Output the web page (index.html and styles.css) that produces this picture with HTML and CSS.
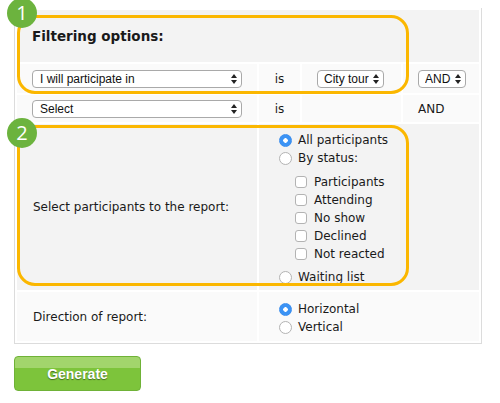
FILE: index.html
```html
<!DOCTYPE html>
<html lang="en">
<head>
    <meta charset="UTF-8">
    <title>Participants report</title>
    <link rel="stylesheet" href="styles.css">
</head>
<body>
    <div class="report">
        <table class="report-table">
            <colgroup>
                <col class="col-field">
                <col class="col-op">
                <col class="col-value">
                <col class="col-join">
            </colgroup>
            <tr class="head-row">
                <td colspan="4"><h3>Filtering options:</h3></td>
            </tr>
            <tr class="light-row first-filter">
                <td class="pad-cell">
                    <span class="select-box wide">
                        <select><option>I will participate in</option></select>
                        <svg class="arrows" width="6" height="10" viewBox="0 0 6 10"><path d="M3 0L6 4H0z M3 10L0 6H6z" fill="#222"/></svg>
                    </span>
                </td>
                <td class="op-cell">is</td>
                <td class="pad-cell">
                    <span class="select-box">
                        <select><option>City tour</option></select>
                        <svg class="arrows" width="6" height="10" viewBox="0 0 6 10"><path d="M3 0L6 4H0z M3 10L0 6H6z" fill="#222"/></svg>
                    </span>
                </td>
                <td class="pad-cell">
                    <span class="select-box">
                        <select><option>AND</option></select>
                        <svg class="arrows" width="6" height="10" viewBox="0 0 6 10"><path d="M3 0L6 4H0z M3 10L0 6H6z" fill="#222"/></svg>
                    </span>
                </td>
            </tr>
            <tr class="light-row">
                <td class="pad-cell">
                    <span class="select-box wide">
                        <select><option>Select</option></select>
                        <svg class="arrows" width="6" height="10" viewBox="0 0 6 10"><path d="M3 0L6 4H0z M3 10L0 6H6z" fill="#222"/></svg>
                    </span>
                </td>
                <td class="op-cell">is</td>
                <td class="pad-cell"></td>
                <td class="pad-cell">AND</td>
            </tr>
            <tr class="gray-row">
                <td class="label-cell">Select participants to the report:</td>
                <td colspan="3" class="options-cell">
                    <ul class="options participants">
                        <li><label><input type="radio" name="who" checked> All participants</label></li>
                        <li><label><input type="radio" name="who"> By status:</label>
                            <ul class="statuses">
                                <li><label><input type="checkbox"> Participants</label></li>
                                <li><label><input type="checkbox"> Attending</label></li>
                                <li><label><input type="checkbox"> No show</label></li>
                                <li><label><input type="checkbox"> Declined</label></li>
                                <li><label><input type="checkbox"> Not reacted</label></li>
                            </ul>
                        </li>
                        <li><label><input type="radio" name="who"> Waiting list</label></li>
                    </ul>
                </td>
            </tr>
            <tr class="light-row">
                <td class="label-cell">Direction of report:</td>
                <td colspan="3" class="options-cell">
                    <ul class="options direction">
                        <li><label><input type="radio" name="dir" checked> Horizontal</label></li>
                        <li><label><input type="radio" name="dir"> Vertical</label></li>
                    </ul>
                </td>
            </tr>
        </table>

        <button class="generate-btn">Generate</button>

        <!-- help callouts -->
        <div class="callout callout-filter"></div>
        <div class="callout callout-people"></div>
        <span class="step step-1">1</span>
        <span class="step step-2">2</span>
    </div>
</body>
</html>
```

FILE: styles.css
```css
body {
    margin: 0;
    padding: 10px 14px;
    font-family: 'DejaVu Sans', Verdana, sans-serif;
    font-size: 12px;
    color: #1a1a1a;
    background: #fff;
}
.report {
    position: relative;
    width: 468px;
}
.report-table {
    width: 468px;
    table-layout: fixed;
    border-collapse: separate;
    border-spacing: 2px;
    border: 1px solid #dcdcdc;
    border-top: none;
    margin-top: -2px;
}
.col-field { width: 240px; }
.col-op { width: 41px; }
.col-value { width: 99px; }
.col-join { width: 76px; }
.report-table td {
    padding: 0;
    vertical-align: middle;
}
.head-row td {
    background-color: #f3f3f3;
    height: 52px;
    padding-left: 15px;
}
.head-row h3 {
    margin: 0;
    font-size: 13.5px;
    font-weight: bold;
}
.light-row td {
    background-color: #fafafa;
}
.gray-row td {
    background-color: #f3f3f3;
}
.light-row .pad-cell,
.light-row .op-cell {
    height: 27px;
}
.first-filter .pad-cell,
.first-filter .op-cell {
    height: 29px;
}
.pad-cell {
    padding-left: 15px !important;
}
.op-cell {
    text-align: center;
}
.label-cell {
    padding-left: 16px !important;
}
.select-box {
    position: relative;
    display: inline-flex;
    vertical-align: middle;
}
.select-box select {
    -webkit-appearance: none;
    appearance: none;
    height: 18px;
    padding: 0 14px 0 6px;
    border: 1px solid #a9a9a9;
    border-radius: 4px;
    background: #fff;
    font-family: 'Liberation Sans', Arial, sans-serif;
    font-size: 12px;
    color: #111;
}
.select-box.wide select {
    width: 210px;
    padding-left: 7px;
}
.select-box .arrows {
    position: absolute;
    right: 5px;
    top: 4px;
    pointer-events: none;
}
.options-cell {
    padding-left: 20px !important;
}
.options,
.statuses {
    list-style: none;
    margin: 0;
    padding: 0;
}
.participants {
    padding: 7px 0 4px;
}
.direction {
    padding: 8px 0 5px;
}
.options li label {
    display: flex;
    align-items: center;
    gap: 6px;
    height: 18px;
}
.statuses {
    margin: 6px 0 5px 16px;
}
.statuses li label {
    gap: 7px;
}
.options input {
    -webkit-appearance: none;
    appearance: none;
    margin: 0;
    background: #fff;
    border: 1px solid #b3b3b3;
    flex-shrink: 0;
}
.options input[type="radio"] {
    width: 13px;
    height: 13px;
    border-radius: 50%;
}
.options input[type="radio"]:checked {
    background: radial-gradient(circle, #fff 0 2px, #3b93f5 2.5px);
    border-color: #3b8eee;
}
.options input[type="checkbox"] {
    width: 12px;
    height: 12px;
    border-radius: 3px;
}
.generate-btn {
    display: block;
    margin-top: 12px;
    width: 127px;
    height: 35px;
    border: 1px solid #6fb237;
    border-radius: 4px;
    background: linear-gradient(#a2d56c 0, #a2d56c 33%, #7dc43b 33%, #7dc43b 100%);
    color: #fff;
    font-family: 'Liberation Sans', Arial, sans-serif;
    font-size: 14px;
    font-weight: bold;
    text-shadow: 0 1px 1px rgba(0, 0, 0, 0.45);
    cursor: pointer;
}
.callout {
    position: absolute;
    left: 3px;
    width: 392px;
    border: 3px solid #fbb700;
    border-radius: 18px;
    box-sizing: border-box;
    pointer-events: none;
}
.callout-filter {
    top: 7px;
    height: 79px;
}
.callout-people {
    top: 117px;
    height: 161px;
}
.step {
    position: absolute;
    left: -7px;
    width: 30px;
    height: 30px;
    border-radius: 50%;
    background-color: #6cb33e;
    color: #fff;
    font-family: 'Open Sans', Arial, sans-serif;
    font-size: 20px;
    line-height: 30px;
    text-align: center;
}
.step-1 { top: -10px; }
.step-2 { top: 110px; }
```
